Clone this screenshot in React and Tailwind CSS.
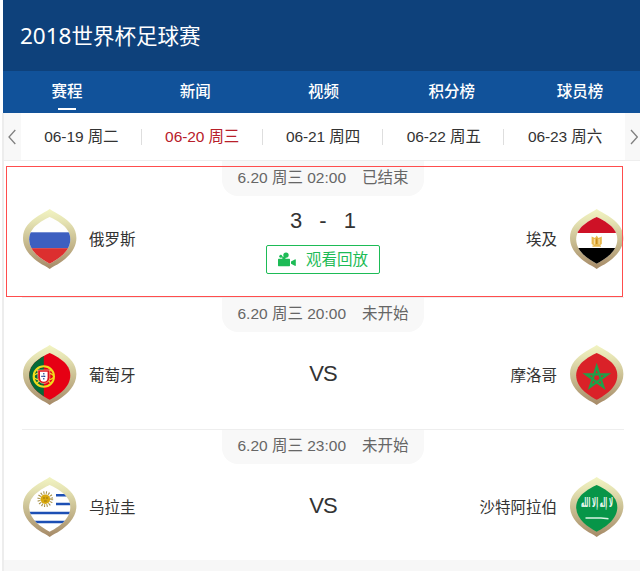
import React, { useState } from "react";

const tabs = ["赛程", "新闻", "视频", "积分榜", "球员榜"];

const dates = [
  "06-19 周二",
  "06-20 周三",
  "06-21 周四",
  "06-22 周五",
  "06-23 周六",
];

const matches = [
  {
    time: "6.20 周三 02:00",
    status: "已结束",
    home: { name: "俄罗斯", flag: "russia" },
    away: { name: "埃及", flag: "egypt" },
    score: [3, 1],
  },
  {
    time: "6.20 周三 20:00",
    status: "未开始",
    home: { name: "葡萄牙", flag: "portugal" },
    away: { name: "摩洛哥", flag: "morocco" },
  },
  {
    time: "6.20 周三 23:00",
    status: "未开始",
    home: { name: "乌拉圭", flag: "uruguay" },
    away: { name: "沙特阿拉伯", flag: "saudi" },
  },
];

const SHIELD = "M26.7 8C35 12 47.3 18.5 47.3 30.2C47.3 42.5 35 50.3 26.7 54.7C18.4 50.3 6.2 42.5 6.2 30.2C6.2 18.5 18.4 12 26.7 8Z";

const flags = {
  russia: (
    <>
      <rect width="54" height="60" fill="#fefefe" />
      <rect y="23.3" width="54" height="16" fill="#3d5fc0" />
      <rect y="39.2" width="54" height="21" fill="#dc2f2f" />
    </>
  ),
  egypt: (
    <>
      <rect width="54" height="60" fill="#fff" />
      <rect width="54" height="24" fill="#ce1126" />
      <rect y="39" width="54" height="21" fill="#000" />
      <path
        d="M21.6 27.5L25 29L26.7 26.5L28.4 29L31.8 27.5V35L29.5 36.5H31V37.8H22.4V36.5H24L21.6 35Z"
        fill="#e8b84c"
      />
      <path d="M24.3 30V35.5M29.1 30V35.5" stroke="#fbeecb" strokeWidth="0.8" />
      <path d="M26.7 29.5V35" stroke="#c98d1e" strokeWidth="1.4" />
    </>
  ),
  portugal: (
    <>
      <rect width="54" height="60" fill="#e60014" />
      <rect width="20.8" height="60" fill="#046a38" />
      <circle cx="20.8" cy="31.5" r="10.2" fill="none" stroke="#f2dc1c" strokeWidth="2" />
      <ellipse cx="20.8" cy="31.5" rx="9.8" ry="4" fill="none" stroke="#f2dc1c" strokeWidth="1.2" />
      <path d="M14 25L27.6 38M27.6 25L14 38" stroke="#f2dc1c" strokeWidth="1.2" />
      <path d="M14.8 25H26.8V32.5A6 6 0 0 1 14.8 32.5Z" fill="#e0101c" stroke="#f4d9a8" strokeWidth="0.6" />
      <path d="M17 26.8H24.6V32.5A3.8 4.2 0 0 1 17 32.5Z" fill="#fff" />
      <path d="M20.8 28V35M18.3 31.3H23.3" stroke="#24418f" strokeWidth="1.2" strokeDasharray="1.5 1" />
    </>
  ),
  morocco: (
    <>
      <rect width="54" height="60" fill="#da2128" />
      <path
        d="M26.7 21.5L33.4 42L16 29.4H37.5L20 42Z"
        fill="none"
        stroke="#1fa049"
        strokeWidth="2.3"
        strokeLinejoin="miter"
      />
    </>
  ),
  uruguay: (
    <>
      <rect width="54" height="60" fill="#fff" />
      <path d="M33 18.2H54M33 27H54M0 36H54M0 45H54" stroke="#1c4fb4" strokeWidth="2.6" />
      <circle cx="22.3" cy="22.2" r="6.4" fill="none" stroke="#a8924a" strokeWidth="3" strokeDasharray="1 1.5" />
      <circle cx="22.3" cy="22.2" r="4.8" fill="#d9a90f" />
      <path d="M20 21H22M23 21H25M21 24H23.8" stroke="#8a6a10" strokeWidth="0.8" />
    </>
  ),
  saudi: (
    <>
      <rect width="54" height="60" fill="#079548" />
      <path d="M15.5 41H31L38.5 41.8" fill="none" stroke="#d9f2e2" strokeWidth="1.4" />
    </>
  ),
};

const FlagBadge = ({ flag }) => (
  <svg viewBox="0 0 54 60" className="h-[60px] w-[54px] shrink-0 overflow-visible">
    <defs>
      <linearGradient id={`gold-${flag}`} x1="0" y1="0" x2="0" y2="1">
        <stop offset="0" stopColor="#f2f4c2" />
        <stop offset="0.2" stopColor="#e6e4b4" />
        <stop offset="0.55" stopColor="#c8bc90" />
        <stop offset="1" stopColor="#a68a68" />
      </linearGradient>
      <clipPath id={`shield-${flag}`}>
        <path d={SHIELD} />
      </clipPath>
    </defs>
    <path
      d="M26.7 0C30 2.4 34 4.2 38 6.8C47 12.6 53.4 19 53.4 29C53.4 41 44 49 37 53.8C33.5 56.2 30 57.6 26.7 60C23.4 57.6 19.9 56.2 16.4 53.8C9.4 49 0 41 0 29C0 19 6.4 12.6 15.4 6.8C19.4 4.2 23.4 2.4 26.7 0Z"
      fill={`url(#gold-${flag})`}
    />
    <g clipPath={`url(#shield-${flag})`}>{flags[flag]}</g>
    {flag === "saudi" && (
      <text
        transform="translate(26.9 29.6) scale(0.6 1.4)"
        textAnchor="middle"
        fontSize="9"
        fontWeight="bold"
        fill="#f0faf4"
        className="font-['DejaVu_Sans',sans-serif]"
      >
        لا إله إلا الله
      </text>
    )}
  </svg>
);

const CameraIcon = () => (
  <svg viewBox="0 0 18 15" className="h-[15px] w-[18px]" fill="#1dbb56">
    <circle cx="2.8" cy="4.2" r="1.5" />
    <circle cx="8" cy="3.1" r="2.7" />
    <path d="M4 4.5L8 5L7 7.5H4.5Z" />
    <rect y="6.8" width="12" height="7.4" rx="0.6" />
    <path d="M13 9.6L16.8 7.4Q17.8 7 17.8 8V13.2Q17.8 14.2 16.8 13.8L13 11.8Z" />
  </svg>
);

const Chevron = ({ d }) => (
  <svg viewBox="0 0 8 16" className="h-4 w-2" fill="none" stroke="#808080" strokeWidth="1.3">
    <path d={d} />
  </svg>
);

const Match = ({ match }) => (
  <div className="group relative flex h-[132px] justify-between border-t border-[#eeeeee] pt-[47px] first:h-[136px] first:border-t-0 first:pt-12 last:h-[131px]">
    <div className="flex h-[60px] items-center gap-3 pl-px">
      <FlagBadge flag={match.home.flag} />
      <span className="pt-0.5">{match.home.name}</span>
    </div>
    <div className="absolute inset-x-0 top-0 flex flex-col items-center">
      <div className="flex h-[34px] w-[202px] justify-center gap-4 rounded-b-2xl bg-[#f8f8f8] pt-[4px] leading-6 text-[#666] group-first:h-[35px] group-first:pt-[5px]">
        <span>{match.time}</span>
        <span>{match.status}</span>
      </div>
      {match.score ? (
        <>
          <div className="mt-2 flex h-8 items-center gap-[17px] text-[22px]">
            <span>{match.score[0]}</span>
            <span>-</span>
            <span>{match.score[1]}</span>
          </div>
          <button className="mt-[9px] flex h-[29px] w-[114px] items-center justify-center gap-[10px] rounded-[2px] border border-[#1dbb56] text-[#1dbb56]">
            <CameraIcon />
            <span className="leading-6">观看回放</span>
          </button>
        </>
      ) : (
        <div className="mt-[26px] text-[22px] leading-8 tracking-[-1px]">VS</div>
      )}
    </div>
    <div className="flex h-[60px] items-center gap-[13px]">
      <span className="pt-0.5">{match.away.name}</span>
      <FlagBadge flag={match.away.flag} />
    </div>
  </div>
);

export default function App() {
  const [tab, setTab] = useState(0);
  const [day, setDay] = useState(1);

  return (
    <div className="relative h-[571px] w-[640px] overflow-hidden bg-white pl-[2px] font-['Liberation_Sans','Noto_Sans_CJK_SC',sans-serif] text-[15.5px] text-[#333]">
      <div className="w-[642px]">
        {/* Header */}
        <header className="ml-px flex h-[71px] items-center bg-[#0e417b] pl-[17px] pt-px text-[21.5px] text-white">
          <h1 className="font-['Noto_Sans','Noto_Sans_CJK_SC',sans-serif]">
            <span className="text-[22.5px]">2018</span>世界杯足球赛
          </h1>
        </header>
        <nav className="ml-px flex h-[42px] bg-[#11529a] text-white">
          {tabs.map((label, i) => (
            <button
              key={label}
              onClick={() => setTab(i)}
              className="flex flex-1 flex-col items-center pt-[9px]"
            >
              <span className="font-medium leading-6">{label}</span>
              {tab === i && <span className="mt-1 h-[2px] w-[18px] bg-white" />}
            </button>
          ))}
        </nav>

        <div className="border-l-2 border-[#ededed]">
          {/* Date picker */}
          <div className="flex h-12 border-b border-[#eeeeee]">
            <button className="flex w-[17px] items-center justify-center bg-[#f8f8f8] pr-[2px]">
              <Chevron d="M7.3 1L1 8L7.3 15" />
            </button>
            <div className="flex flex-1">
              {dates.map((date, i) => (
                <button
                  key={date}
                  onClick={() => setDay(i)}
                  className="flex flex-1 items-center"
                >
                  <span
                    className={`flex-1 pl-px text-center leading-6 tracking-[-0.1px] ${day === i ? "text-[#b8202a]" : ""}`}
                  >
                    {date}
                  </span>
                  {i < dates.length - 1 && <span className="h-4 w-px bg-[#dedede]" />}
                </button>
              ))}
            </div>
            <button className="flex w-[19px] items-center justify-center bg-[#f8f8f8] pr-[2px]">
              <Chevron d="M1 1L7.3 8L1 15" />
            </button>
          </div>

          {/* Matches */}
          <div className="ml-[18px] w-[602px]">
            {matches.map((match) => (
              <Match key={match.home.name} match={match} />
            ))}
          </div>
          <div className="h-4 bg-[#f7f7f7]" />
        </div>
      </div>

      {/* Highlighted match */}
      <div className="pointer-events-none absolute left-[6px] top-[166px] h-[131px] w-[617px] border border-[#ff4d4d]" />
    </div>
  );
}
